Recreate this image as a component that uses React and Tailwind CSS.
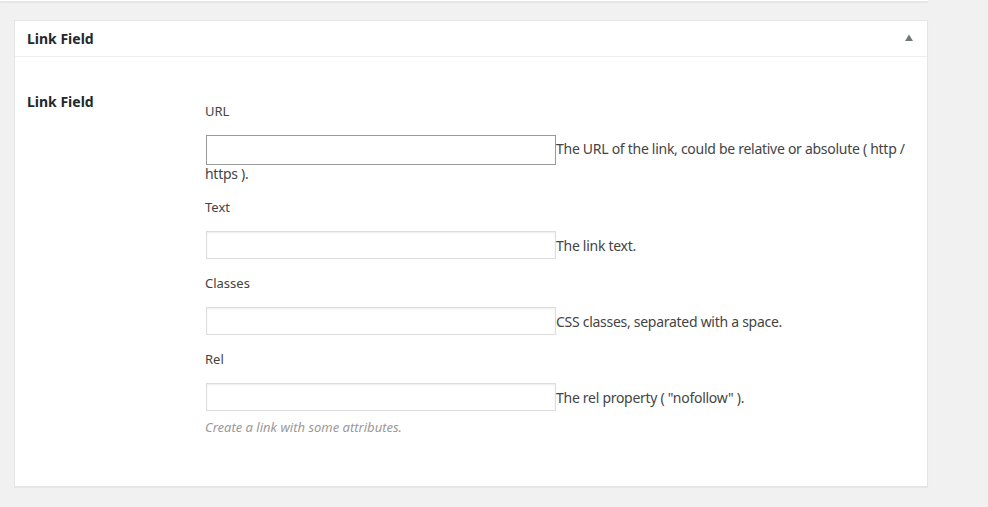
const fields = [
  { label: "URL", desc: "The URL of the link, could be relative or absolute ( http / https ).", wrap: true },
  { label: "Text", desc: "The link text." },
  { label: "Classes", desc: "CSS classes, separated with a space." },
  { label: "Rel", desc: "The rel property ( \"nofollow\" )." },
];

function Field({ label, desc, wrap }) {
  return (
    <div className="mb-[15px]">
      <p className="text-[13px] leading-[18px] text-[#444] mb-[15px]">{label}</p>
      {wrap ? (
        // long description wraps under the input
        <div className="text-[14px] leading-[18px] tracking-[-0.28px] text-[#444]">
          <input
            type="text"
            className="align-middle ml-[1px] w-[350px] h-[30px] bg-white border border-[#999]"
          />
          {desc}
        </div>
      ) : (
        <div className="flex items-center h-[28px] text-[14px] tracking-[-0.28px] text-[#444]">
          <input
            type="text"
            className="ml-[1px] w-[350px] h-[28px] bg-white border border-[#ddd] shadow-[inset_0_1px_2px_rgba(0,0,0,0.07)]"
          />
          <span>{desc}</span>
        </div>
      )}
    </div>
  );
}

export default function App() {
  return (
    <div
      className="min-h-screen bg-[#f1f1f1] text-[#23282d]"
      style={{ fontFamily: '"Noto Sans", "Open Sans", sans-serif' }}
    >
      <div className="h-[2px] w-[928px] bg-white border-b border-[#e5e5e5] shadow-[0_1px_1px_rgba(0,0,0,0.04)]" />

      <div className="ml-[14px] mt-[18px] w-[914px] bg-white border border-[#e5e5e5] shadow-[0_1px_1px_rgba(0,0,0,0.04)]">
        {/* header */}
        <div className="h-[36px] flex items-center justify-between pl-[12px] pr-[13px] border-b border-[#eee]">
          <h2 className="text-[14px] font-bold -mt-[1px]">Link Field</h2>
          <svg width="10" height="8" viewBox="0 0 10 8" className="-mt-[1px]">
            <path d="M5 0.5 L9 7 L1 7 Z" fill="#72777c" />
          </svg>
        </div>

        {/* body */}
        <div className="flex pl-[12px] pr-[12px] pt-[34px] pb-[50px]">
          <div className="w-[178px] shrink-0 text-[14px] font-bold">Link Field</div>
          <div className="flex-1 pt-[11px]">
            {fields.map((f) => (
              <Field key={f.label} {...f} />
            ))}
            <p className="text-[13px] leading-[18px] italic text-[#999] -mt-[8px]">Create a link with some attributes.</p>
          </div>
        </div>
      </div>
    </div>
  );
}
